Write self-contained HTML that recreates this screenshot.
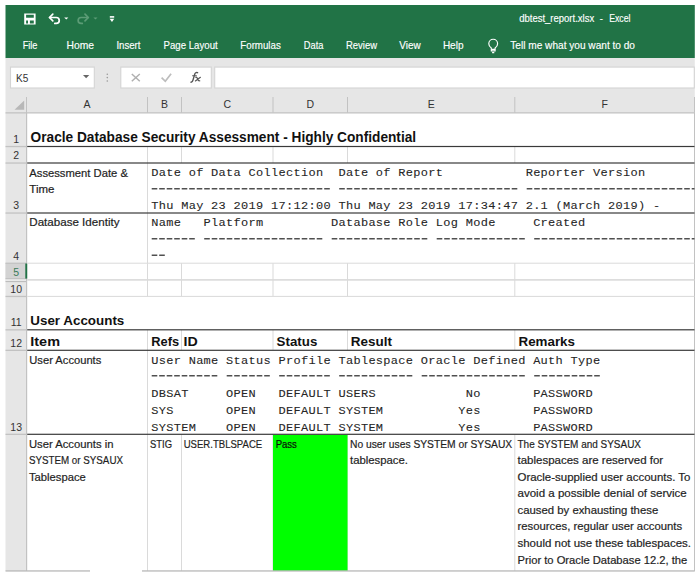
<!DOCTYPE html>
<html><head><meta charset="utf-8"><title>dbtest_report.xlsx - Excel</title>
<style>html,body{margin:0;padding:0;background:#fff;width:699px;height:578px;overflow:hidden}svg{display:block;font-family:"Liberation Sans",sans-serif}</style>
</head><body>
<svg width="699" height="578" viewBox="0 0 699 578">
<rect x="5.50" y="5.00" width="689.30" height="53.10" fill="#217346" />
<rect x="5.50" y="58.00" width="689.30" height="54.80" fill="#e6e6e6" />
<rect x="5.50" y="112.80" width="21.50" height="458.10" fill="#e6e6e6" />
<rect x="27.00" y="112.80" width="667.80" height="458.10" fill="#fff" />
<path fill="#fff" fill-rule="evenodd" d="M24.2 13.4 H35.6 V24.6 H24.2 Z M26.1 14.7 H33.8 V17.8 H26.1 Z M26.1 20.4 H28 V23.4 H26.1 Z M29.9 20.4 H33.8 V23.4 H29.9 Z"/>
<g fill="none" stroke="#fff" stroke-width="1.7" stroke-linecap="round" stroke-linejoin="round"><path d="M49.6 17.5 H56.3 A2.95 2.95 0 0 1 56.3 23.4 H54.8"/><path d="M52.8 14.2 L49.5 17.5 L52.8 20.8"/></g>
<path d="M64.2 17.4 H68.3 L66.25 19.6 Z" fill="#fff"/>
<g fill="none" stroke="#5c9c76" stroke-width="1.7" stroke-linecap="round" stroke-linejoin="round"><path d="M88.3 17.5 H81.1 A2.95 2.95 0 0 0 81.1 23.4 H82.3"/><path d="M85 14.2 L88.3 17.5 L85 20.8"/></g>
<path d="M93.4 17.4 H97.5 L95.45 19.6 Z" fill="#5c9c76"/>
<rect x="109.80" y="16.10" width="4.40" height="1.60" fill="#fff" />
<path d="M109.6 18.7 H114.3 L111.95 22 Z" fill="#fff"/>
<text x="519.20" y="22.20" font-family="Liberation Sans" font-size="10.9" fill="#fff" stroke="#fff" stroke-width="0.15" textLength="75.0" lengthAdjust="spacingAndGlyphs" >dbtest_report.xlsx</text>
<text x="599.50" y="22.20" font-family="Liberation Sans" font-size="10.8" fill="#fff" >-</text>
<text x="609.20" y="22.20" font-family="Liberation Sans" font-size="10.9" fill="#fff" stroke="#fff" stroke-width="0.15" textLength="21.3" lengthAdjust="spacingAndGlyphs" >Excel</text>
<text x="22.70" y="49.30" font-family="Liberation Sans" font-size="10.9" fill="#fff" stroke="#fff" stroke-width="0.15" textLength="14.8" lengthAdjust="spacingAndGlyphs" >File</text>
<text x="66.60" y="49.30" font-family="Liberation Sans" font-size="10.9" fill="#fff" stroke="#fff" stroke-width="0.15" textLength="27.5" lengthAdjust="spacingAndGlyphs" >Home</text>
<text x="116.40" y="49.30" font-family="Liberation Sans" font-size="10.9" fill="#fff" stroke="#fff" stroke-width="0.15" textLength="24.1" lengthAdjust="spacingAndGlyphs" >Insert</text>
<text x="163.50" y="49.30" font-family="Liberation Sans" font-size="10.9" fill="#fff" stroke="#fff" stroke-width="0.15" textLength="54.2" lengthAdjust="spacingAndGlyphs" >Page Layout</text>
<text x="240.30" y="49.30" font-family="Liberation Sans" font-size="10.9" fill="#fff" stroke="#fff" stroke-width="0.15" textLength="40.5" lengthAdjust="spacingAndGlyphs" >Formulas</text>
<text x="303.80" y="49.30" font-family="Liberation Sans" font-size="10.9" fill="#fff" stroke="#fff" stroke-width="0.15" textLength="19.6" lengthAdjust="spacingAndGlyphs" >Data</text>
<text x="346.00" y="49.30" font-family="Liberation Sans" font-size="10.9" fill="#fff" stroke="#fff" stroke-width="0.15" textLength="31.0" lengthAdjust="spacingAndGlyphs" >Review</text>
<text x="399.30" y="49.30" font-family="Liberation Sans" font-size="10.9" fill="#fff" stroke="#fff" stroke-width="0.15" textLength="21.3" lengthAdjust="spacingAndGlyphs" >View</text>
<text x="442.90" y="49.30" font-family="Liberation Sans" font-size="10.9" fill="#fff" stroke="#fff" stroke-width="0.15" textLength="20.6" lengthAdjust="spacingAndGlyphs" >Help</text>
<text x="510.30" y="49.30" font-family="Liberation Sans" font-size="10.9" fill="#fff" stroke="#fff" stroke-width="0.15" textLength="124.7" lengthAdjust="spacingAndGlyphs" >Tell me what you want to do</text>
<g fill="none" stroke="#fff" stroke-width="1.15"><path d="M491.3 50.8 V48 C489.6 46.8 488.8 45.3 488.8 43.7 A4.4 4.4 0 0 1 497.6 43.7 C497.6 45.3 496.8 46.8 495.1 48 V50.8 Z"/><path d="M491.3 49.3 H495.1 M492.1 52.6 H494.3"/></g>
<rect x="10.50" y="67.10" width="83.80" height="20.90" fill="#fff" stroke="#d4d4d4" stroke-width="1.1"/>
<rect x="120.80" y="67.10" width="90.50" height="20.90" fill="#fff" stroke="#d4d4d4" stroke-width="1.1"/>
<rect x="214.70" y="67.10" width="479.60" height="20.90" fill="#fff" stroke="#d4d4d4" stroke-width="1.1"/>
<text x="16.00" y="82.00" font-family="Liberation Sans" font-size="10.8" fill="#333" textLength="12.3" lengthAdjust="spacingAndGlyphs" >K5</text>
<path d="M83 75 H89.3 L86.15 78.3 Z" fill="#666"/>
<circle cx="107.3" cy="74.2" r="0.8" fill="#999"/>
<circle cx="107.3" cy="77.6" r="0.8" fill="#999"/>
<circle cx="107.3" cy="81" r="0.8" fill="#999"/>
<g stroke="#b0b0b0" stroke-width="1.5"><path d="M131.8 74 L139.8 81.2 M139.8 74 L131.8 81.2"/></g>
<path d="M161.6 77.6 L165.3 81.3 L171.1 73.8" fill="none" stroke="#bdbdbd" stroke-width="1.7"/>
<g fill="none" stroke="#555" stroke-linecap="round"><path stroke-width="1.35" d="M190.9 82.2 C192 82.3 192.6 81.6 193 80 L194.7 74.2 C195.1 72.8 196 72.2 197.6 72.7"/><path stroke-width="1.1" d="M192.6 75.8 H196.4"/><path stroke-width="1.15" d="M195.6 77.2 C196.6 77 197.2 77.6 197.6 79 C198 80.4 198.6 81 199.8 80.8 M200.4 77.3 L195.4 81"/></g>
<rect x="5.50" y="112.20" width="689.30" height="1.30" fill="#c2c2c2" />
<rect x="26.00" y="97.00" width="1.00" height="15.80" fill="#c2c2c2" />
<rect x="147.00" y="97.00" width="1.00" height="15.80" fill="#c2c2c2" />
<rect x="181.00" y="97.00" width="1.00" height="15.80" fill="#c2c2c2" />
<rect x="272.50" y="97.00" width="1.00" height="15.80" fill="#c2c2c2" />
<rect x="347.00" y="97.00" width="1.00" height="15.80" fill="#c2c2c2" />
<rect x="514.30" y="97.00" width="1.00" height="15.80" fill="#c2c2c2" />
<rect x="694.00" y="97.00" width="1.00" height="15.80" fill="#c2c2c2" />
<text x="87.00" y="108.40" font-family="Liberation Sans" font-size="10.5" fill="#333" text-anchor="middle" >A</text>
<text x="164.50" y="108.40" font-family="Liberation Sans" font-size="10.5" fill="#333" text-anchor="middle" >B</text>
<text x="227.25" y="108.40" font-family="Liberation Sans" font-size="10.5" fill="#333" text-anchor="middle" >C</text>
<text x="310.25" y="108.40" font-family="Liberation Sans" font-size="10.5" fill="#333" text-anchor="middle" >D</text>
<text x="431.15" y="108.40" font-family="Liberation Sans" font-size="10.5" fill="#333" text-anchor="middle" >E</text>
<text x="604.65" y="108.40" font-family="Liberation Sans" font-size="10.5" fill="#333" text-anchor="middle" >F</text>
<path d="M14.5 109.8 L24.2 109.8 L24.2 100.4 Z" fill="#b8b8b8"/>
<rect x="5.50" y="263.20" width="20.50" height="15.40" fill="#d3d3d3" />
<rect x="5.50" y="278.60" width="20.50" height="2.80" fill="#f0f0f0" />
<rect x="5.50" y="280.90" width="20.50" height="1.20" fill="#bdbdbd" />
<rect x="5.50" y="145.90" width="20.50" height="1.30" fill="#c2c2c2" />
<text x="16.20" y="142.80" font-family="Liberation Sans" font-size="10.5" fill="#333" text-anchor="middle" >1</text>
<rect x="5.50" y="162.40" width="20.50" height="1.30" fill="#c2c2c2" />
<text x="16.20" y="159.30" font-family="Liberation Sans" font-size="10.5" fill="#333" text-anchor="middle" >2</text>
<rect x="5.50" y="212.40" width="20.50" height="1.30" fill="#c2c2c2" />
<text x="16.20" y="209.30" font-family="Liberation Sans" font-size="10.5" fill="#333" text-anchor="middle" >3</text>
<rect x="5.50" y="262.60" width="20.50" height="1.30" fill="#c2c2c2" />
<text x="16.20" y="259.50" font-family="Liberation Sans" font-size="10.5" fill="#333" text-anchor="middle" >4</text>
<rect x="5.50" y="278.00" width="20.50" height="1.30" fill="#c2c2c2" />
<text x="16.20" y="276.00" font-family="Liberation Sans" font-size="10.5" fill="#3a7a58" text-anchor="middle" >5</text>
<rect x="5.50" y="295.80" width="20.50" height="1.30" fill="#c2c2c2" />
<text x="16.20" y="292.70" font-family="Liberation Sans" font-size="10.5" fill="#333" text-anchor="middle" >10</text>
<rect x="5.50" y="329.20" width="20.50" height="1.30" fill="#c2c2c2" />
<text x="16.20" y="326.10" font-family="Liberation Sans" font-size="10.5" fill="#333" text-anchor="middle" >11</text>
<rect x="5.50" y="349.70" width="20.50" height="1.30" fill="#c2c2c2" />
<text x="16.20" y="346.60" font-family="Liberation Sans" font-size="10.5" fill="#333" text-anchor="middle" >12</text>
<rect x="5.50" y="433.70" width="20.50" height="1.30" fill="#c2c2c2" />
<text x="16.20" y="430.60" font-family="Liberation Sans" font-size="10.5" fill="#333" text-anchor="middle" >13</text>
<rect x="26.00" y="112.80" width="1.20" height="458.10" fill="#c2c2c2" />
<rect x="25.30" y="263.50" width="1.90" height="15.10" fill="#217346" />
<rect x="147.00" y="146.50" width="1.00" height="16.50" fill="#dadada" />
<rect x="181.00" y="146.50" width="1.00" height="16.50" fill="#dadada" />
<rect x="272.50" y="146.50" width="1.00" height="16.50" fill="#dadada" />
<rect x="347.00" y="146.50" width="1.00" height="16.50" fill="#dadada" />
<rect x="514.30" y="146.50" width="1.00" height="16.50" fill="#dadada" />
<rect x="147.00" y="163.00" width="1.00" height="100.20" fill="#dadada" />
<rect x="147.00" y="263.20" width="1.00" height="33.20" fill="#dadada" />
<rect x="181.00" y="263.20" width="1.00" height="33.20" fill="#dadada" />
<rect x="272.50" y="263.20" width="1.00" height="33.20" fill="#dadada" />
<rect x="347.00" y="263.20" width="1.00" height="33.20" fill="#dadada" />
<rect x="514.30" y="263.20" width="1.00" height="33.20" fill="#dadada" />
<rect x="147.00" y="329.80" width="1.00" height="20.50" fill="#dadada" />
<rect x="181.00" y="329.80" width="1.00" height="20.50" fill="#dadada" />
<rect x="272.50" y="329.80" width="1.00" height="20.50" fill="#dadada" />
<rect x="347.00" y="329.80" width="1.00" height="20.50" fill="#dadada" />
<rect x="514.30" y="329.80" width="1.00" height="20.50" fill="#dadada" />
<rect x="147.00" y="350.30" width="1.00" height="84.00" fill="#dadada" />
<rect x="147.00" y="434.30" width="1.00" height="136.60" fill="#dadada" />
<rect x="181.00" y="434.30" width="1.00" height="136.60" fill="#dadada" />
<rect x="272.50" y="434.30" width="1.00" height="136.60" fill="#dadada" />
<rect x="347.00" y="434.30" width="1.00" height="136.60" fill="#dadada" />
<rect x="514.30" y="434.30" width="1.00" height="136.60" fill="#dadada" />
<rect x="694.00" y="112.80" width="1.00" height="458.10" fill="#c2c2c2" />
<rect x="27.20" y="262.70" width="667.30" height="1.00" fill="#dadada" />
<rect x="27.20" y="279.10" width="667.30" height="1.60" fill="#dadada" />
<rect x="27.20" y="295.90" width="667.30" height="1.00" fill="#dadada" />
<rect x="273.00" y="434.80" width="74.50" height="136.10" fill="#00ff00" />
<rect x="27.20" y="145.90" width="667.30" height="1.20" fill="#3a3a3a" />
<rect x="27.20" y="162.40" width="667.30" height="1.20" fill="#3a3a3a" />
<rect x="27.20" y="212.40" width="667.30" height="1.20" fill="#3a3a3a" />
<rect x="27.20" y="329.20" width="667.30" height="1.20" fill="#3a3a3a" />
<rect x="27.20" y="349.70" width="667.30" height="1.20" fill="#3a3a3a" />
<rect x="27.20" y="433.70" width="667.30" height="1.20" fill="#3a3a3a" />
<rect x="5.50" y="570.30" width="84.50" height="1.30" fill="#b8b8b8" />
<rect x="142.00" y="570.30" width="552.80" height="1.30" fill="#b8b8b8" />
<clipPath id="gc"><rect x="27" y="113" width="667.5" height="458"/></clipPath><g clip-path="url(#gc)">
<text x="30.60" y="141.50" font-family="Liberation Sans" font-size="13.8" font-weight="700" fill="#111" textLength="385.5" lengthAdjust="spacingAndGlyphs" >Oracle Database Security Assessment - Highly Confidential</text>
<text x="29.30" y="176.80" font-family="Liberation Sans" font-size="11.0" fill="#1f1f1f" stroke="#1f1f1f" stroke-width="0.2" textLength="98.6" lengthAdjust="spacingAndGlyphs" >Assessment Date &amp;</text>
<text x="29.30" y="193.20" font-family="Liberation Sans" font-size="11.0" fill="#1f1f1f" stroke="#1f1f1f" stroke-width="0.2" textLength="25.1" lengthAdjust="spacingAndGlyphs" >Time</text>
<text x="29.30" y="226.30" font-family="Liberation Sans" font-size="11.0" fill="#1f1f1f" stroke="#1f1f1f" stroke-width="0.2" textLength="90.2" lengthAdjust="spacingAndGlyphs" >Database Identity</text>
<text transform="translate(151.20,176.30) scale(1.15,1)" x="0" y="0" font-family="Liberation Mono" font-size="10.4" letter-spacing="0.282" fill="#262626" stroke="#262626" stroke-width="0.08" xml:space="preserve">Date of Data Collection  Date of Report           Reporter Version</text>
<line x1="151.70" y1="188.70" x2="331.70" y2="188.70" stroke="#505050" stroke-width="1.6" stroke-dasharray="5.6 1.9"/>
<line x1="339.20" y1="188.70" x2="519.20" y2="188.70" stroke="#505050" stroke-width="1.6" stroke-dasharray="5.6 1.9"/>
<line x1="526.70" y1="188.70" x2="751.70" y2="188.70" stroke="#505050" stroke-width="1.6" stroke-dasharray="5.6 1.9"/>
<text transform="translate(151.20,209.40) scale(1.15,1)" x="0" y="0" font-family="Liberation Mono" font-size="10.4" letter-spacing="0.282" fill="#262626" stroke="#262626" stroke-width="0.08" xml:space="preserve">Thu May 23 2019 17:12:00 Thu May 23 2019 17:34:47 2.1 (March 2019) -</text>
<text transform="translate(151.20,226.40) scale(1.15,1)" x="0" y="0" font-family="Liberation Mono" font-size="10.4" letter-spacing="0.282" fill="#262626" stroke="#262626" stroke-width="0.08" xml:space="preserve">Name   Platform         Database Role Log Mode     Created</text>
<line x1="151.70" y1="238.70" x2="196.70" y2="238.70" stroke="#505050" stroke-width="1.6" stroke-dasharray="5.6 1.9"/>
<line x1="204.20" y1="238.70" x2="324.20" y2="238.70" stroke="#505050" stroke-width="1.6" stroke-dasharray="5.6 1.9"/>
<line x1="331.70" y1="238.70" x2="429.20" y2="238.70" stroke="#505050" stroke-width="1.6" stroke-dasharray="5.6 1.9"/>
<line x1="436.70" y1="238.70" x2="526.70" y2="238.70" stroke="#505050" stroke-width="1.6" stroke-dasharray="5.6 1.9"/>
<line x1="534.20" y1="238.70" x2="759.20" y2="238.70" stroke="#505050" stroke-width="1.6" stroke-dasharray="5.6 1.9"/>
<line x1="151.70" y1="255.30" x2="166.70" y2="255.30" stroke="#505050" stroke-width="1.6" stroke-dasharray="5.6 1.9"/>
<text x="30.30" y="325.30" font-family="Liberation Sans" font-size="13.5" font-weight="700" fill="#111" textLength="94.0" lengthAdjust="spacingAndGlyphs" >User Accounts</text>
<text x="30.30" y="345.90" font-family="Liberation Sans" font-size="13.5" font-weight="700" fill="#111" textLength="29.7" lengthAdjust="spacingAndGlyphs" >Item</text>
<text x="151.30" y="345.90" font-family="Liberation Sans" font-size="13.5" font-weight="700" fill="#111" textLength="27.9" lengthAdjust="spacingAndGlyphs" >Refs</text>
<text x="183.50" y="345.90" font-family="Liberation Sans" font-size="13.5" font-weight="700" fill="#111" textLength="14.2" lengthAdjust="spacingAndGlyphs" >ID</text>
<text x="276.60" y="345.90" font-family="Liberation Sans" font-size="13.5" font-weight="700" fill="#111" textLength="40.7" lengthAdjust="spacingAndGlyphs" >Status</text>
<text x="350.80" y="345.90" font-family="Liberation Sans" font-size="13.5" font-weight="700" fill="#111" textLength="41.2" lengthAdjust="spacingAndGlyphs" >Result</text>
<text x="518.50" y="345.90" font-family="Liberation Sans" font-size="13.5" font-weight="700" fill="#111" textLength="56.5" lengthAdjust="spacingAndGlyphs" >Remarks</text>
<text x="29.30" y="364.10" font-family="Liberation Sans" font-size="11.0" fill="#1f1f1f" stroke="#1f1f1f" stroke-width="0.2" textLength="72.0" lengthAdjust="spacingAndGlyphs" >User Accounts</text>
<text transform="translate(151.20,363.80) scale(1.15,1)" x="0" y="0" font-family="Liberation Mono" font-size="10.4" letter-spacing="0.282" fill="#262626" stroke="#262626" stroke-width="0.08" xml:space="preserve">User Name Status Profile Tablespace Oracle Defined Auth Type</text>
<line x1="151.70" y1="375.70" x2="219.20" y2="375.70" stroke="#505050" stroke-width="1.6" stroke-dasharray="5.6 1.9"/>
<line x1="226.70" y1="375.70" x2="271.70" y2="375.70" stroke="#505050" stroke-width="1.6" stroke-dasharray="5.6 1.9"/>
<line x1="279.20" y1="375.70" x2="331.70" y2="375.70" stroke="#505050" stroke-width="1.6" stroke-dasharray="5.6 1.9"/>
<line x1="339.20" y1="375.70" x2="414.20" y2="375.70" stroke="#505050" stroke-width="1.6" stroke-dasharray="5.6 1.9"/>
<line x1="421.70" y1="375.70" x2="526.70" y2="375.70" stroke="#505050" stroke-width="1.6" stroke-dasharray="5.6 1.9"/>
<line x1="534.20" y1="375.70" x2="601.70" y2="375.70" stroke="#505050" stroke-width="1.6" stroke-dasharray="5.6 1.9"/>
<text transform="translate(151.20,397.20) scale(1.15,1)" x="0" y="0" font-family="Liberation Mono" font-size="10.4" letter-spacing="0.282" fill="#262626" stroke="#262626" stroke-width="0.08" xml:space="preserve">DBSAT     OPEN   DEFAULT USERS            No       PASSWORD</text>
<text transform="translate(151.20,413.90) scale(1.15,1)" x="0" y="0" font-family="Liberation Mono" font-size="10.4" letter-spacing="0.282" fill="#262626" stroke="#262626" stroke-width="0.08" xml:space="preserve">SYS       OPEN   DEFAULT SYSTEM          Yes       PASSWORD</text>
<text transform="translate(151.20,430.60) scale(1.15,1)" x="0" y="0" font-family="Liberation Mono" font-size="10.4" letter-spacing="0.282" fill="#262626" stroke="#262626" stroke-width="0.08" xml:space="preserve">SYSTEM    OPEN   DEFAULT SYSTEM          Yes       PASSWORD</text>
<text x="28.90" y="447.70" font-family="Liberation Sans" font-size="11.0" fill="#1f1f1f" stroke="#1f1f1f" stroke-width="0.2" textLength="84.6" lengthAdjust="spacingAndGlyphs" >User Accounts in</text>
<text x="28.90" y="464.25" font-family="Liberation Sans" font-size="11.0" fill="#1f1f1f" stroke="#1f1f1f" stroke-width="0.2" textLength="94.1" lengthAdjust="spacingAndGlyphs" >SYSTEM or SYSAUX</text>
<text x="28.90" y="480.80" font-family="Liberation Sans" font-size="11.0" fill="#1f1f1f" stroke="#1f1f1f" stroke-width="0.2" textLength="56.9" lengthAdjust="spacingAndGlyphs" >Tablespace</text>
<text x="150.00" y="447.70" font-family="Liberation Sans" font-size="11.0" fill="#1f1f1f" stroke="#1f1f1f" stroke-width="0.2" textLength="22.0" lengthAdjust="spacingAndGlyphs" >STIG</text>
<text x="183.70" y="447.70" font-family="Liberation Sans" font-size="11.0" fill="#1f1f1f" stroke="#1f1f1f" stroke-width="0.2" textLength="78.5" lengthAdjust="spacingAndGlyphs" >USER.TBLSPACE</text>
<text x="275.70" y="447.70" font-family="Liberation Sans" font-size="11.0" fill="#0a0a0a" stroke="#0a0a0a" stroke-width="0.2" textLength="21.2" lengthAdjust="spacingAndGlyphs" >Pass</text>
<text x="350.00" y="447.70" font-family="Liberation Sans" font-size="11.0" fill="#1f1f1f" stroke="#1f1f1f" stroke-width="0.2" textLength="162.2" lengthAdjust="spacingAndGlyphs" >No user uses SYSTEM or SYSAUX</text>
<text x="350.00" y="464.25" font-family="Liberation Sans" font-size="11.0" fill="#1f1f1f" stroke="#1f1f1f" stroke-width="0.2" textLength="58.0" lengthAdjust="spacingAndGlyphs" >tablespace.</text>
<text x="517.50" y="447.70" font-family="Liberation Sans" font-size="11.0" fill="#1f1f1f" stroke="#1f1f1f" stroke-width="0.2" textLength="123.5" lengthAdjust="spacingAndGlyphs" >The SYSTEM and SYSAUX</text>
<text x="517.50" y="464.25" font-family="Liberation Sans" font-size="11.0" fill="#1f1f1f" stroke="#1f1f1f" stroke-width="0.2" textLength="145.7" lengthAdjust="spacingAndGlyphs" >tablespaces are reserved for</text>
<text x="517.50" y="480.80" font-family="Liberation Sans" font-size="11.0" fill="#1f1f1f" stroke="#1f1f1f" stroke-width="0.2" textLength="172.9" lengthAdjust="spacingAndGlyphs" >Oracle-supplied user accounts. To</text>
<text x="517.50" y="497.35" font-family="Liberation Sans" font-size="11.0" fill="#1f1f1f" stroke="#1f1f1f" stroke-width="0.2" textLength="169.3" lengthAdjust="spacingAndGlyphs" >avoid a possible denial of service</text>
<text x="517.50" y="513.90" font-family="Liberation Sans" font-size="11.0" fill="#1f1f1f" stroke="#1f1f1f" stroke-width="0.2" textLength="140.7" lengthAdjust="spacingAndGlyphs" >caused by exhausting these</text>
<text x="517.50" y="530.45" font-family="Liberation Sans" font-size="11.0" fill="#1f1f1f" stroke="#1f1f1f" stroke-width="0.2" textLength="164.6" lengthAdjust="spacingAndGlyphs" >resources, regular user accounts</text>
<text x="517.50" y="547.00" font-family="Liberation Sans" font-size="11.0" fill="#1f1f1f" stroke="#1f1f1f" stroke-width="0.2" textLength="173.5" lengthAdjust="spacingAndGlyphs" >should not use these tablespaces.</text>
<text x="517.50" y="563.55" font-family="Liberation Sans" font-size="11.0" fill="#1f1f1f" stroke="#1f1f1f" stroke-width="0.2" textLength="169.8" lengthAdjust="spacingAndGlyphs" >Prior to Oracle Database 12.2, the</text>
</g>
</svg>
</body></html>
